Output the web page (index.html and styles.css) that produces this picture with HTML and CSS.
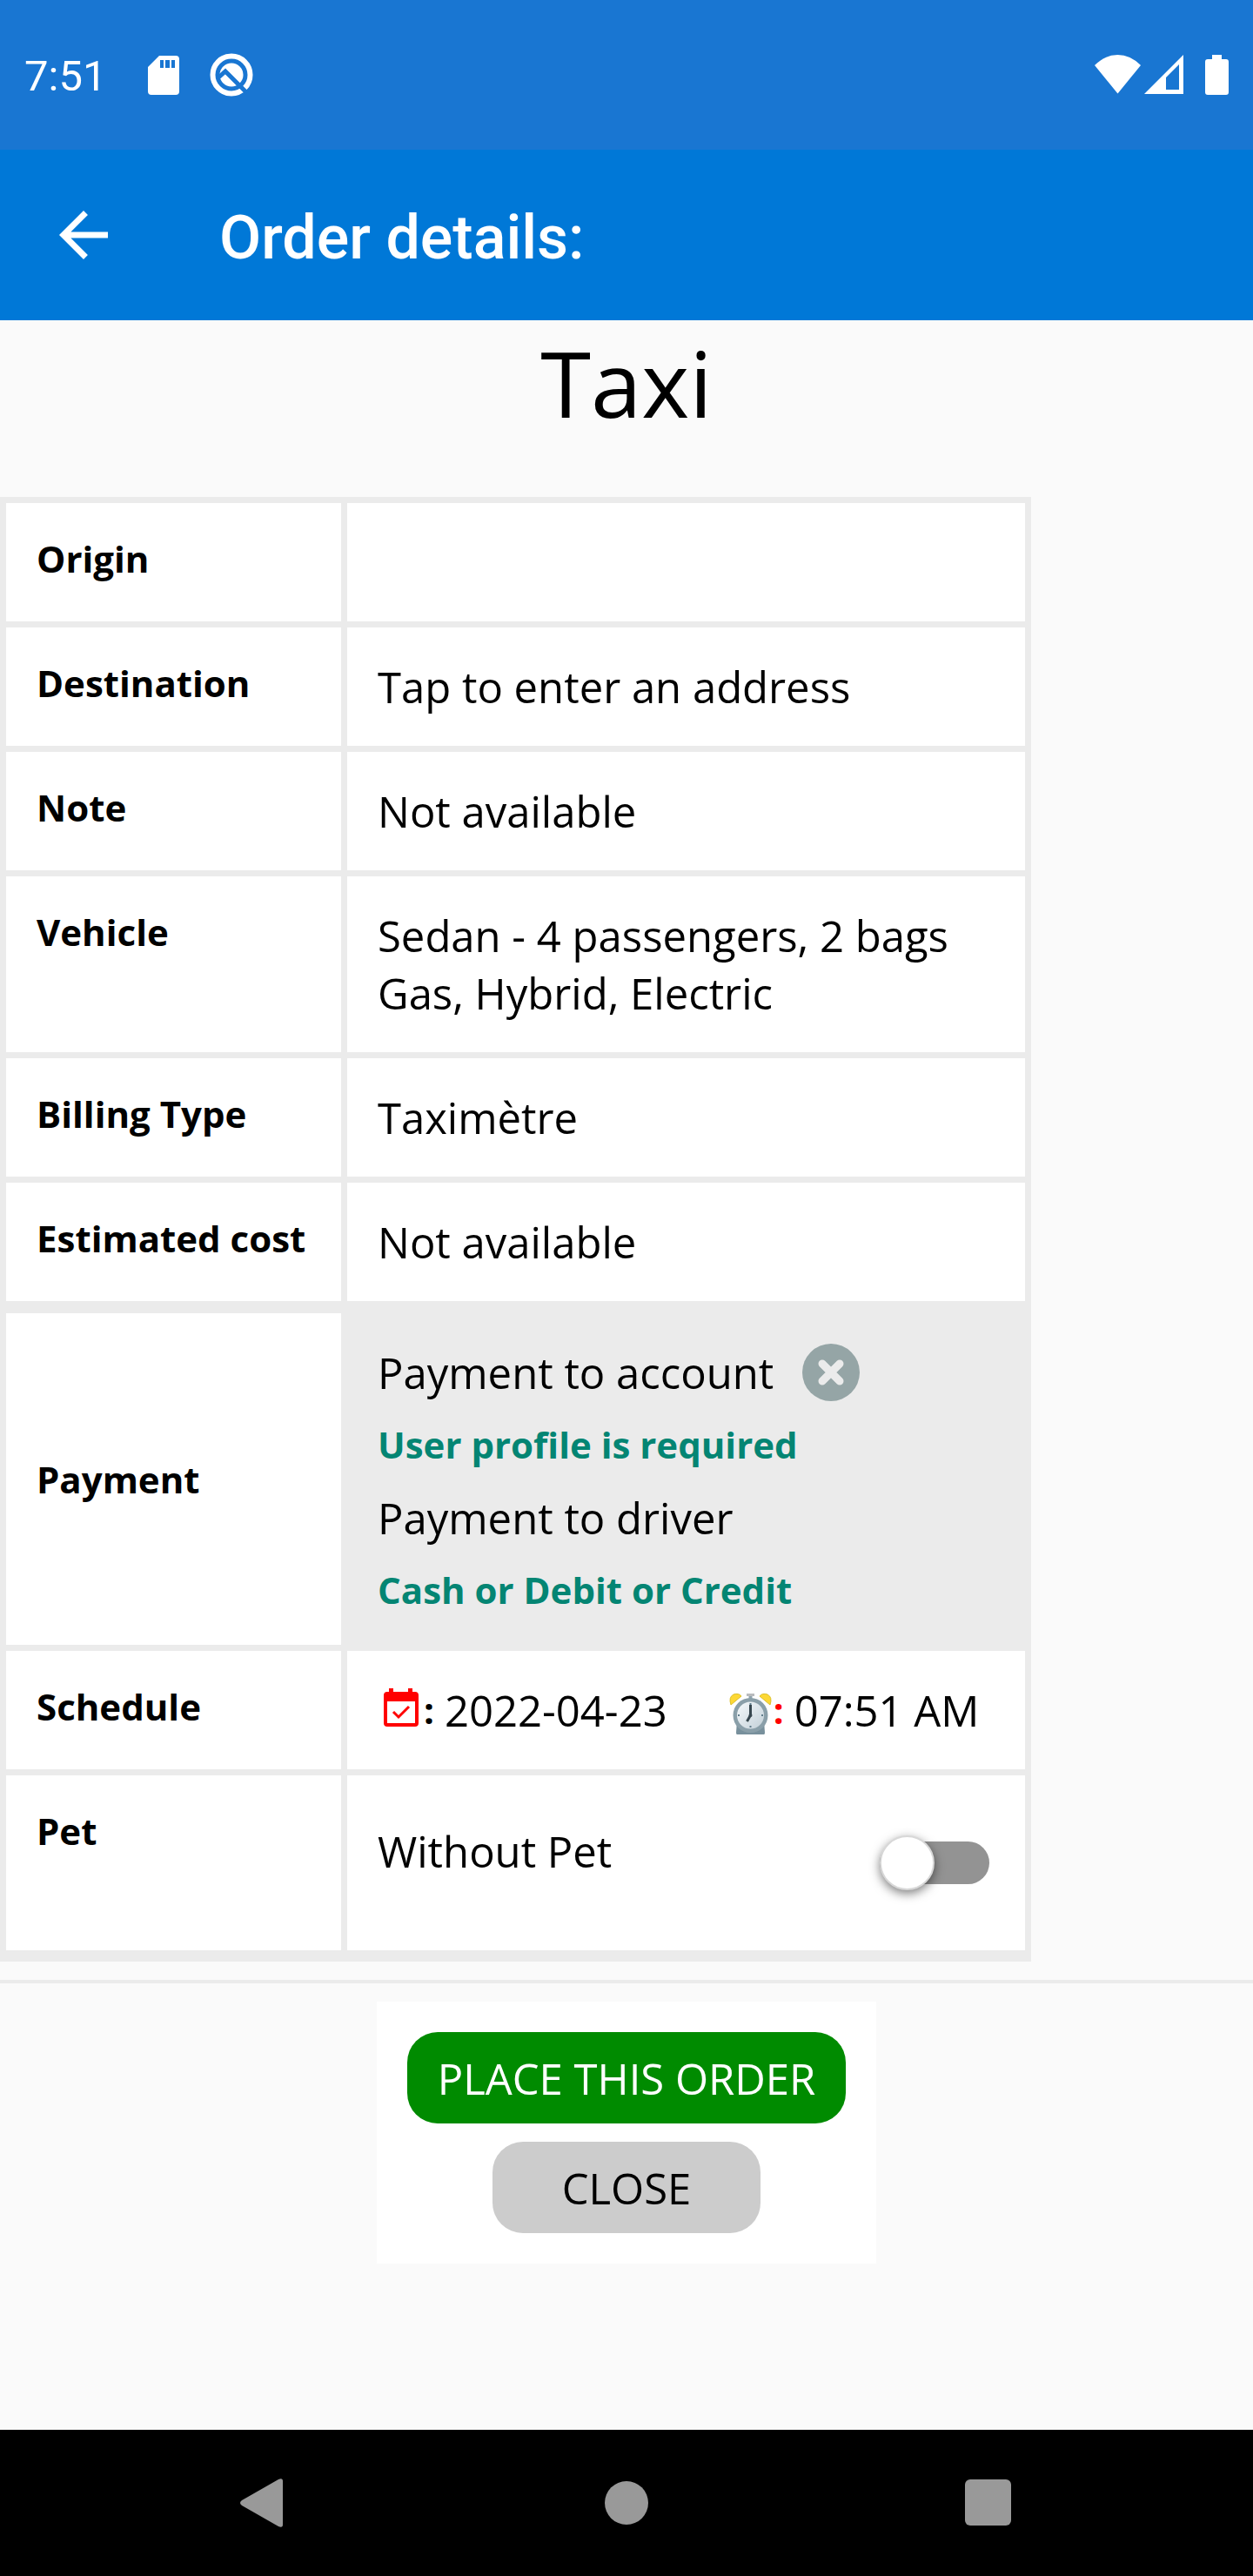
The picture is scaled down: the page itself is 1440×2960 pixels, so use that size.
FILE: index.html
```html
<!DOCTYPE html>
<html lang="en">

<head>
    <meta charset="UTF-8">
    <meta name="viewport" content="width=device-width, initial-scale=1.0">
    <title>Order details</title>
    <link rel="stylesheet" href="styles.css">
</head>

<body>

    <div class="status-bar">
        <span class="clock">7:51</span>
        <svg class="sd-icon" width="36" height="45" viewBox="0 0 36 45" aria-hidden="true">
            <path fill="#fff" fill-rule="evenodd" d="M13 0H32Q36 0 36 4V41Q36 45 32 45H4Q0 45 0 41V13ZM14 5V14H18V5ZM20 5V14H25V5ZM27 5V14H31V5Z"/>
        </svg>
        <svg class="q-icon" width="50" height="50" viewBox="0 0 50 50" aria-hidden="true">
            <circle cx="25" cy="25" r="21.5" fill="none" stroke="#fff" stroke-width="6"/>
            <circle cx="25" cy="25" r="13.5" fill="#fff"/>
            <path d="M9 29L18 21L43 46" fill="none" stroke="#1976d2" stroke-width="5"/>
        </svg>
        <div class="signals">
            <svg width="53" height="45" viewBox="0 0 53 45" aria-hidden="true">
                <path fill="#fff" d="M0 12Q12 0 26.500 0T53 12L26.500 44.500Z"/>
            </svg>
            <svg width="45" height="45" viewBox="0 0 45 45" aria-hidden="true">
                <path fill="#fff" fill-rule="evenodd" d="M0 45L45 0V45ZM25 26V40H40V11Z"/>
            </svg>
            <svg class="battery" width="27" height="46" viewBox="0 0 27 46" aria-hidden="true">
                <path fill="#fff" d="M8 0H19V5H24Q27 5 27 8V43Q27 46 24 46H3Q0 46 0 43V8Q0 5 3 5H8Z"/>
            </svg>
        </div>
    </div>

    <header class="app-bar">
        <button class="back" type="button" aria-label="Back">
            <svg width="84" height="84" viewBox="0 0 24 24" aria-hidden="true">
                <path fill="#fff" d="M20 11H7.830l5.590-5.590L12 4l-8 8 8 8 1.410-1.410L7.830 13H20v-2z"/>
            </svg>
        </button>
        <h1>Order details:</h1>
    </header>

    <main>
        <h2>Taxi</h2>

        <table class="details">
            <tr>
                <th scope="row">Origin</th>
                <td></td>
            </tr>
            <tr>
                <th scope="row">Destination</th>
                <td>Tap to enter an address</td>
            </tr>
            <tr>
                <th scope="row">Note</th>
                <td>Not available</td>
            </tr>
            <tr>
                <th scope="row">Vehicle</th>
                <td>Sedan - 4 passengers, 2 bags<br>Gas, Hybrid, Electric</td>
            </tr>
            <tr>
                <th scope="row">Billing Type</th>
                <td>Taximètre</td>
            </tr>
            <tr>
                <th scope="row">Estimated cost</th>
                <td>Not available</td>
            </tr>
            <tr class="payment">
                <th scope="row">Payment</th>
                <td>
                    <dl>
                        <dt>
                            Payment to account
                            <svg width="66" height="66" viewBox="0 0 66 66" aria-hidden="true">
                                <circle cx="33" cy="33" r="33" fill="#95a5a6"/>
                                <path d="M23 23L43 43M43 23L23 43" stroke="#ebebeb" stroke-width="9" stroke-linecap="round"/>
                            </svg>
                        </dt>
                        <dd>User profile is required</dd>
                        <dt>Payment to driver</dt>
                        <dd>Cash or Debit or Credit</dd>
                    </dl>
                </td>
            </tr>
            <tr>
                <th scope="row">Schedule</th>
                <td>
                    <div class="schedule">
                        <span class="when">
                            <svg width="53" height="53" viewBox="0 0 53 53" aria-hidden="true">
                                <path fill="#f00" fill-rule="evenodd" d="M13 1H18V5H35V1H40V5H43Q47 5 47 9V41Q47 45 43 45H11Q7 45 7 41V9Q7 5 11 5H13ZM11 16V41H43V16Z"/>
                                <path d="M18 28L24 34L36 22" fill="none" stroke="#f00" stroke-width="3"/>
                            </svg>
                            <b>:</b>
                            <span>2022-04-23</span>
                        </span>
                        <span class="when time">
                            <svg width="53" height="55" viewBox="0 0 53 55" aria-hidden="true">
                                <defs>
                                    <linearGradient id="face" x1="0" y1="0" x2="1" y2="1">
                                        <stop offset="0" stop-color="#f5f9fb"/>
                                        <stop offset="1" stop-color="#c3d0d8"/>
                                    </linearGradient>
                                </defs>
                                <path fill="#78909c" d="M11 39H42L43 53Q43 55 42 55H11Q10 55 10 53Z"/>
                                <path fill="#fdd835" stroke="#dcc02a" d="M4 21Q1 12 7 9Q13 7 16 11ZM49 21Q52 12 46 9Q40 7 37 11Z"/>
                                <path stroke="#90a4ae" stroke-width="4" d="M26.500 8V14"/>
                                <path stroke="#b9bbbd" stroke-width="3" d="M22 9.500H31"/>
                                <circle cx="26.500" cy="33" r="20" fill="#8a9fa9"/>
                                <circle cx="26.500" cy="33" r="15.500" fill="url(#face)"/>
                                <path stroke="#607d8b" stroke-width="2" d="M26.500 19V21M26.500 45V47M12 33H14M39 33H41"/>
                                <path stroke="#37474f" stroke-width="3" d="M26.500 33V21M26.500 33L22.500 40"/>
                                <circle cx="26.500" cy="33" r="2" fill="#37474f"/>
                            </svg>
                            <b>:</b>
                            <span>07:51 AM</span>
                        </span>
                    </div>
                </td>
            </tr>
            <tr>
                <th scope="row">Pet</th>
                <td>
                    <label class="pet">
                        <span>Without Pet</span>
                        <input class="switch" type="checkbox">
                    </label>
                </td>
            </tr>
        </table>

        <hr>

        <div class="actions">
            <button class="place" type="button">PLACE THIS ORDER</button>
            <button class="close" type="button">CLOSE</button>
        </div>
    </main>

    <nav class="nav-bar">
        <button type="button" aria-label="Back">
            <svg width="56" height="56" viewBox="0 0 56 56" aria-hidden="true">
                <path fill="#999" d="M2 25L44 1Q49 -1 49 3V53Q49 57 44 55L2 31Q-2 28 2 25Z"/>
            </svg>
        </button>
        <button type="button" aria-label="Home">
            <svg width="56" height="56" viewBox="0 0 56 56" aria-hidden="true">
                <circle cx="28" cy="28" r="25" fill="#999"/>
            </svg>
        </button>
        <button type="button" aria-label="Recent apps">
            <svg width="56" height="56" viewBox="0 0 56 56" aria-hidden="true">
                <rect x="1" y="1" width="53" height="53" rx="6" fill="#999"/>
            </svg>
        </button>
    </nav>

</body>

</html>
```
FILE: styles.css
```css
* {
    box-sizing: border-box;
}

body {
    margin: 0;
    min-height: 100vh;
    display: flex;
    flex-direction: column;
    background: #fafafa;
    color: #000;
    font-family: "Open Sans", sans-serif;
    font-size: 49px;
    line-height: 66px;
}

svg {
    display: block;
    flex: none;
}

button {
    border: none;
    padding: 0;
    background: none;
    font: inherit;
    cursor: pointer;
}

/* status bar */
.status-bar {
    display: flex;
    align-items: center;
    height: 172px;
    padding: 0 28px;
    background: #1976d2;
    color: #fff;
    font-family: Roboto, sans-serif;
}

.clock {
    padding-top: 4px;
}

.sd-icon {
    margin-left: 48px;
}

.q-icon {
    margin-left: 35px;
}

.signals {
    display: flex;
    gap: 4px;
    margin-left: auto;
}

.battery {
    margin-left: 21px;
}

/* title bar */
.app-bar {
    display: flex;
    align-items: center;
    gap: 114px;
    height: 196px;
    padding: 0 54px;
    background: #0078d7;
    color: #fff;
}

.app-bar h1 {
    margin: 0;
    padding-top: 6px;
    font: 500 70px Roboto, sans-serif;
}

main {
    flex: 1;
}

h2 {
    margin: 0 0 60px;
    font-size: 105px;
    font-weight: 400;
    line-height: 143px;
    text-align: center;
}

/* order table */
.details {
    border-spacing: 7px;
    padding-bottom: 6px;
    background: #ebebeb;
}

.details th,
.details td {
    padding: 35px;
    background: #fff;
    text-align: left;
    vertical-align: top;
}

.details th {
    min-width: 385px;
    height: 136px;
    font-size: 42px;
    line-height: 57px;
    white-space: nowrap;
}

.details .payment th,
.details .payment td {
    border-top: 7px solid #ebebeb;
    vertical-align: middle;
}

.details .payment td {
    background: #ebebeb;
}

dl {
    margin: 0;
}

dt {
    display: flex;
    gap: 33px;
}

dd {
    margin: 21px 0 23px;
    color: #048573;
    font-size: 42px;
    font-weight: 700;
    line-height: 57px;
}

dd:last-child {
    margin-bottom: 0;
}

.schedule {
    display: flex;
    gap: 69px;
    padding-right: 18px;
}

.when {
    display: flex;
    align-items: center;
    height: 66px;
}

.when b {
    width: 24px;
    font-size: 42px;
}

.time b {
    color: #f00;
}

.pet {
    display: flex;
    align-items: center;
    justify-content: space-between;
    height: 131px;
    padding-right: 6px;
}

.pet span {
    padding-bottom: 28px;
}

.switch {
    appearance: none;
    display: flex;
    align-items: center;
    width: 126px;
    height: 49px;
    margin: 0;
    border-radius: 25px;
    background: #939393;
}

.switch::before {
    content: "";
    box-sizing: border-box;
    flex: none;
    width: 63px;
    height: 63px;
    border: 2px solid #d8d8d8;
    border-radius: 50%;
    background: #fff;
    box-shadow: 0 4px 12px rgba(0, 0, 0, 0.5);
}

.switch:checked {
    justify-content: flex-end;
}

hr {
    height: 4px;
    margin: 21px 0;
    border: none;
    background: #ebebeb;
}

/* buttons */
.actions {
    display: flex;
    flex-direction: column;
    align-items: center;
    gap: 21px;
    width: fit-content;
    margin: 0 auto;
    padding: 35px;
    background: #fff;
}

.actions button {
    height: 105px;
    padding: 0 35px;
    border-radius: 35px;
}

.actions .place {
    background: #008b00;
    color: #fff;
}

.actions .close {
    padding: 0 80px;
    background: #ccc;
    color: #000;
}

/* system navigation */
.nav-bar {
    display: grid;
    grid-template-columns: repeat(3, 1fr);
    height: 168px;
    padding: 0 96px;
    background: #000;
}

.nav-bar button {
    display: flex;
    align-items: center;
    justify-content: center;
}
```
